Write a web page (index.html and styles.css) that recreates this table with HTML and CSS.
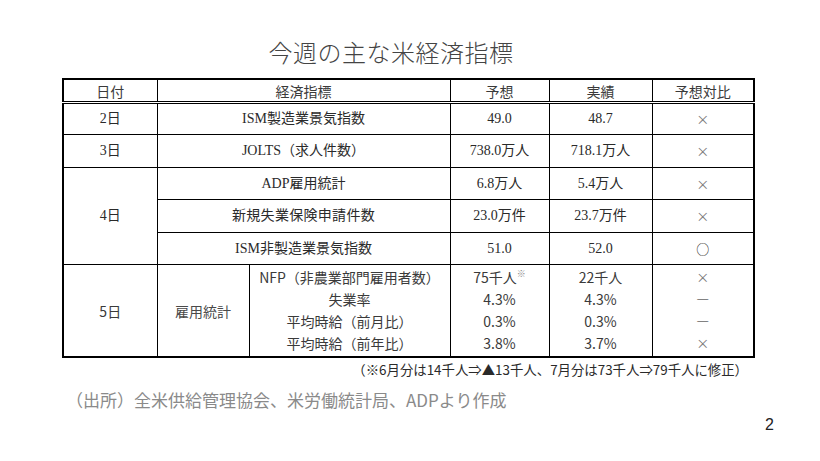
FILE: index.html
```html
<!DOCTYPE html>
<html lang="ja">
<head>
<meta charset="utf-8">
<title>今週の主な米経済指標</title>
<link rel="stylesheet" href="styles.css">
</head>
<body>
<div class="slide">
  <h1 class="title">今週の主な米経済指標</h1>
  <table class="econ">
    <colgroup>
      <col class="c-date"><col class="c-sub"><col class="c-ind"><col class="c-fc"><col class="c-act"><col class="c-cmp">
    </colgroup>
    <thead>
      <tr><th>日付</th><th colspan="2">経済指標</th><th>予想</th><th>実績</th><th>予想対比</th></tr>
    </thead>
    <tbody>
      <tr class="r-a"><td class="serif">2日</td><td colspan="2" class="serif">ISM製造業景気指数</td><td class="serif">49.0</td><td class="serif">48.7</td><td class="mark">×</td></tr>
      <tr class="r-b"><td class="serif">3日</td><td colspan="2" class="serif">JOLTS（求人件数）</td><td class="serif">738.0万人</td><td class="serif">718.1万人</td><td class="mark">×</td></tr>
      <tr class="r-c"><td rowspan="3" class="serif">4日</td><td colspan="2" class="serif">ADP雇用統計</td><td class="serif">6.8万人</td><td class="serif">5.4万人</td><td class="mark">×</td></tr>
      <tr class="r-d"><td colspan="2" class="serif spaced">新規失業保険申請件数</td><td class="serif">23.0万件</td><td class="serif">23.7万件</td><td class="mark">×</td></tr>
      <tr class="r-c"><td colspan="2" class="serif">ISM非製造業景気指数</td><td class="serif">51.0</td><td class="serif">52.0</td><td class="mark dark">○</td></tr>
      <tr class="g g-first"><td rowspan="4" class="sans">5日</td><td rowspan="4" class="sans gray">雇用統計</td><td class="sans">NFP（非農業部門雇用者数）</td><td class="sans">75千人<sup class="kome">※</sup></td><td class="sans">22千人</td><td class="mark">×</td></tr>
      <tr class="g"><td class="sans">失業率</td><td class="sans">4.3%</td><td class="sans">4.3%</td><td class="mark dark">―</td></tr>
      <tr class="g"><td class="sans">平均時給（前月比）</td><td class="sans">0.3%</td><td class="sans">0.3%</td><td class="mark dark">―</td></tr>
      <tr class="g g-last"><td class="sans">平均時給（前年比）</td><td class="sans">3.8%</td><td class="sans">3.7%</td><td class="mark">×</td></tr>
    </tbody>
  </table>
  <p class="note">（※6月分は14千人⇒▲13千人、7月分は73千人⇒79千人に修正）</p>
  <p class="source">（出所）全米供給管理協会、米労働統計局、ADPより作成</p>
  <div class="pageno">2</div>
</div>
</body>
</html>
```
FILE: styles.css
```css
html, body {
  margin: 0;
  padding: 0;
  background: #ffffff;
}
body {
  width: 820px;
  height: 461px;
  overflow: hidden;
  font-family: "Noto Sans CJK JP", "Noto Sans", sans-serif;
  color: #222;
}
.slide {
  display: flex;
  flex-direction: column;
  padding-top: 37px;
}
.title {
  margin: 0;
  padding-right: 38px;
  text-align: center;
  font-size: 24px;
  line-height: 30px;
  font-weight: 300;
  color: #444;
  letter-spacing: 0.5px;
}
.econ {
  margin: 11px 0 0 62px;
  width: 691px;
  border-collapse: collapse;
  table-layout: fixed;
  border: 2px solid #000;
}
.c-date { width: 94px; }
.c-sub { width: 92px; }
.c-ind { width: 201px; }
.c-fc { width: 99px; }
.c-act { width: 103px; }
.c-cmp { width: 102px; }
.econ th, .econ td {
  border: 1px solid #000;
  padding: 0;
  text-align: center;
  vertical-align: middle;
  white-space: nowrap;
}
.econ th {
  height: 21px;
  font-weight: 400;
  font-size: 14px;
  line-height: 16px;
  color: #3a3a3a;
  border-bottom: 3px double #000;
}
.serif {
  font-family: "Liberation Serif", "Noto Sans CJK JP", serif;
  font-size: 14px;
  line-height: 16px;
  color: #2a2a2a;
}
.spaced { letter-spacing: 0.3px; }
.sans {
  font-family: "Noto Sans CJK JP", "Noto Sans", sans-serif;
  font-size: 14px;
  line-height: 16px;
  color: #3a3a3a;
}
.gray { color: #4a4a4a; }
.mark {
  font-family: "Noto Sans CJK JP", sans-serif;
  font-size: 13px;
  line-height: 16px;
  color: #777;
}
.mark.dark { color: #222; }
.r-a td { height: 30px; }
.r-b td { height: 32px; }
.r-c td { height: 31px; }
.r-d td { height: 32px; }
.econ .g td {
  border-top: none;
  border-bottom: none;
}
.econ .g td[rowspan] {
  border-top: 1px solid #000;
  border-bottom: 2px solid #000;
}
.econ .g-first td { border-top: 1px solid #000; height: 22px; padding-top: 1px; }
.econ .g td { height: 22px; }
.econ .g-last td { border-bottom: 2px solid #000; height: 22px; padding-bottom: 2px; }
.kome {
  font-size: 9px;
  color: #888;
  vertical-align: 6px;
  line-height: 0;
}
.note {
  margin: 3px 0 0 0;
  width: 748px;
  text-align: right;
  font-size: 13.4px;
  line-height: 16px;
  color: #2a2a2a;
}
.source {
  margin: 12px 0 0 66px;
  font-size: 17px;
  line-height: 22px;
  color: #8a8a8a;
}
.pageno {
  margin-top: 5px;
  padding-right: 46px;
  text-align: right;
  font-family: "Liberation Sans Narrow", "Liberation Sans", sans-serif;
  font-size: 16px;
  line-height: 18px;
  color: #222;
}
```
